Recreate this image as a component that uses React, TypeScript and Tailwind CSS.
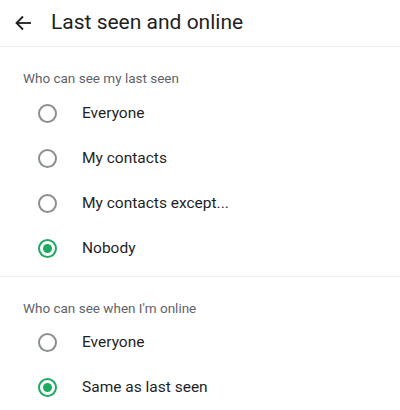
import { useState } from 'react';

type Option = { id: string; label: string };

const lastSeenOptions: Option[] = [
  { id: 'everyone', label: 'Everyone' },
  { id: 'contacts', label: 'My contacts' },
  { id: 'except', label: 'My contacts except...' },
  { id: 'nobody', label: 'Nobody' },
];

const onlineOptions: Option[] = [
  { id: 'everyone', label: 'Everyone' },
  { id: 'same', label: 'Same as last seen' },
];

function Radio({ checked }: { checked: boolean }) {
  return (
    <span
      className={
        checked
          ? 'flex h-[19px] w-[19px] shrink-0 items-center justify-center rounded-full border-2 border-[#1daa61]'
          : 'flex h-[19px] w-[19px] shrink-0 items-center justify-center rounded-full border-2 border-[#8a8f93]'
      }
    >
      {checked && <span className="h-[9px] w-[9px] rounded-full bg-[#1daa61]" />}
    </span>
  );
}

function Section({
  title,
  options,
  value,
  onChange,
  top,
}: {
  title: string;
  options: Option[];
  value: string;
  onChange: (id: string) => void;
  top: 'first' | 'second';
}) {
  return (
    <div className={top === 'first' ? 'pt-[23px] pb-[5px]' : 'pt-[23px]'}>
      <p className="h-4 pl-[23px] text-[13.5px] leading-4 text-[#5f6368]">{title}</p>
      <div className={top === 'first' ? 'mt-[5px]' : 'mt-1'}>
        {options.map(option => (
          <button
            key={option.id}
            className="flex h-[45px] w-full items-center gap-[25px] pl-[38px] text-left"
            onClick={() => onChange(option.id)}
          >
            <Radio checked={value === option.id} />
            <span className="text-[15.5px] text-[#1f1f1f]">{option.label}</span>
          </button>
        ))}
      </div>
    </div>
  );
}

export default function App() {
  const [lastSeen, setLastSeen] = useState('nobody');
  const [online, setOnline] = useState('same');

  return (
    <div className="h-[410px] w-[400px] overflow-hidden bg-white font-['Roboto',sans-serif]">
      {/* Top bar */}
      <div className="flex h-[47px] items-center border-b border-[#f0f0f0]">
        <button className="ml-[14px] flex h-6 w-[18px] items-center justify-center text-[#1f1f1f]">
          <svg width="17" height="16" viewBox="0 0 17 16" fill="none" stroke="currentColor" strokeWidth="1.8">
            <path d="M16 8H2" />
            <path d="M8 1.5L1.5 8 8 14.5" />
          </svg>
        </button>
        <h1 className="ml-[19px] text-[21px] text-[#1f1f1f]">Last seen and online</h1>
      </div>

      <Section
        title="Who can see my last seen"
        options={lastSeenOptions}
        value={lastSeen}
        onChange={setLastSeen}
        top="first"
      />
      <div className="border-t border-[#f0f0f0]">
        <Section
          title="Who can see when I'm online"
          options={onlineOptions}
          value={online}
          onChange={setOnline}
          top="second"
        />
      </div>
    </div>
  );
}
